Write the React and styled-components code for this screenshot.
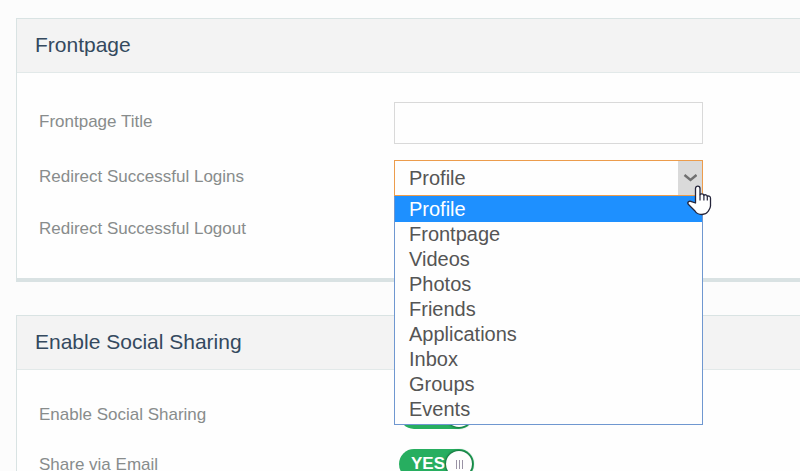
import React from "react";
import styled, { createGlobalStyle } from "styled-components";

const GlobalStyle = createGlobalStyle`
  * { box-sizing: border-box; }
  body {
    margin: 0;
    background: #fcfcfc;
    font-family: "Liberation Sans", Arial, sans-serif;
    overflow: hidden;
  }
`;

const Page = styled.main`
  display: flex;
  flex-direction: column;
  gap: 33px;
  height: 100vh;
  overflow: hidden;
  padding: 18px 0 0 16px;
`;

const Panel = styled.section`
  flex: none;
  background: #fefefe;
  border: 1px solid #d9e3e3;
  border-right: 0;
  border-bottom: 4px solid #d9e2e3;
`;

const PanelTitle = styled.h2`
  margin: 0;
  padding: 0 18px 2px;
  background: #f3f3f3;
  border-bottom: 1px solid #e2e9e9;
  color: #34495e;
  font-size: 21px;
  font-weight: 400;
  line-height: 51px;
`;

const PanelBody = styled.div`
  display: flex;
  flex-direction: column;
  gap: ${(p) => p.$gap}px;
  padding: 29px 22px 30px;
`;

const Row = styled.div`
  display: grid;
  grid-template-columns: 355px minmax(0, 309px);
  align-items: center;
`;

const Label = styled.label`
  padding: ${(p) => (p.$toggle ? "2px 0 0" : "0 0 2px")};
  color: #888c8c;
  font-size: 17px;
  line-height: 20px;
`;

const TextInput = styled.input`
  width: 100%;
  height: 42px;
  padding: 0 14px;
  border: 1px solid #d9d9d9;
  background: #fefefe;
  color: #555;
  font: 20px "Liberation Sans", Arial, sans-serif;
  outline: 0;
`;

const SelectField = styled.div`
  position: relative;
`;

const Select = styled.select`
  display: block;
  width: 100%;
  height: 36px;
  padding: 0 40px 0 14px;
  appearance: none;
  border: 1px solid ${(p) => (p.$open ? "#ec9c4c" : "#d9d9d9")};
  border-radius: 0;
  background: #fefefe;
  color: #555;
  font: 20px "Liberation Sans", Arial, sans-serif;
  outline: 0;
`;

const ArrowBox = styled.span`
  position: absolute;
  inset: 1px 1px 1px auto;
  display: flex;
  align-items: center;
  justify-content: center;
  width: 24px;
  background: #dadada;
  pointer-events: none;
`;

const Menu = styled.ul`
  position: absolute;
  z-index: 2;
  top: 100%;
  left: 0;
  right: 0;
  margin: 0;
  padding: 0 0 2px;
  list-style: none;
  border: 1px solid #6f97d0;
  border-top-color: #1e90ff;
  background: #fefefe;
`;

const MenuItem = styled.li`
  padding: 0 14px;
  background: ${(p) => (p.$selected ? "#1e90ff" : "transparent")};
  color: ${(p) => (p.$selected ? "#fff" : "#555")};
  font-size: 20px;
  line-height: 25px;
`;

const Pointer = styled.svg`
  position: absolute;
  z-index: 3;
  top: 25px;
  right: -9px;
  pointer-events: none;
`;

const Toggle = styled.button`
  display: flex;
  align-items: center;
  justify-content: space-between;
  width: 75px;
  height: 30px;
  margin-left: 5px;
  padding: 0 2px 0 12px;
  border: 0;
  border-radius: 15px;
  background: #27ae60;
  color: #fff;
  font: bold 17px "Liberation Sans", Arial, sans-serif;
`;

const Knob = styled.span`
  display: flex;
  align-items: center;
  justify-content: center;
  gap: 2px;
  flex: none;
  width: 26px;
  height: 26px;
  border-radius: 50%;
  background: #fefefe;
  box-shadow: 0 0 2px 1px #12703a;
`;

const Grip = styled.i`
  width: 1px;
  height: 9px;
  background: #9a93a5;
`;

const pages = [
  "Profile",
  "Frontpage",
  "Videos",
  "Photos",
  "Friends",
  "Applications",
  "Inbox",
  "Groups",
  "Events",
];

function PageSelect({ id, open }) {
  return (
    <SelectField>
      <Select id={id} $open={open} defaultValue="Profile">
        {pages.map((name) => (
          <option key={name}>{name}</option>
        ))}
      </Select>
      <ArrowBox>
        <svg width="14" height="8" viewBox="0 0 14 8" aria-hidden="true">
          <path d="M1.500 1 7.500 6l6-5" fill="none" stroke="#707070" strokeWidth="2.400" />
        </svg>
      </ArrowBox>
      {open && (
        <>
          <Menu role="listbox" aria-label="Pages">
            {pages.map((name, i) => (
              <MenuItem key={name} role="option" aria-selected={i === 0} $selected={i === 0}>
                {name}
              </MenuItem>
            ))}
          </Menu>
          <Pointer width="25" height="31" viewBox="0 0 25 31" aria-hidden="true">
            <path
              d="M8.500 18V3.500c0-3.300 4.500-3.300 4.500 0v6.200c.7-1.300 3.500-1.200 3.900.6.900-1 3.100-.5 3.400 1 1.500-.8 3.200.1 3.200 2v7.700c0 2.200-1.300 3.800-2.500 5.500-1.500 2.200-3.500 3-6 3-3 0-5.500-1-7-3.500l-6.500-6.500c-1.800-2 .7-4.300 3-2.900z"
              fill="#fff"
              stroke="#24243a"
              strokeWidth="1.300"
              strokeLinejoin="round"
            />
            <path d="M13 9.700v5.800M16.900 10.300v5.200M20.300 11.300v4.200" fill="none" stroke="#24243a" strokeWidth="1.200" />
          </Pointer>
        </>
      )}
    </SelectField>
  );
}

function ToggleRow({ id, label }) {
  return (
    <Row>
      <Label htmlFor={id} $toggle>
        {label}
      </Label>
      <Toggle id={id} type="button" role="switch" aria-checked="true">
        YES
        <Knob>
          <Grip />
          <Grip />
          <Grip />
        </Knob>
      </Toggle>
    </Row>
  );
}

export default function App() {
  return (
    <>
      <GlobalStyle />
      <Page>
        <Panel>
          <PanelTitle>Frontpage</PanelTitle>
          <PanelBody $gap={16}>
            <Row>
              <Label htmlFor="title">Frontpage Title</Label>
              <TextInput id="title" type="text" />
            </Row>
            <Row>
              <Label htmlFor="login">Redirect Successful Logins</Label>
              <PageSelect id="login" open />
            </Row>
            <Row>
              <Label htmlFor="logout">Redirect Successful Logout</Label>
              <PageSelect id="logout" />
            </Row>
          </PanelBody>
        </Panel>
        <Panel>
          <PanelTitle>Enable Social Sharing</PanelTitle>
          <PanelBody $gap={20}>
            <ToggleRow id="sharing" label="Enable Social Sharing" />
            <ToggleRow id="email" label="Share via Email" />
          </PanelBody>
        </Panel>
      </Page>
    </>
  );
}
